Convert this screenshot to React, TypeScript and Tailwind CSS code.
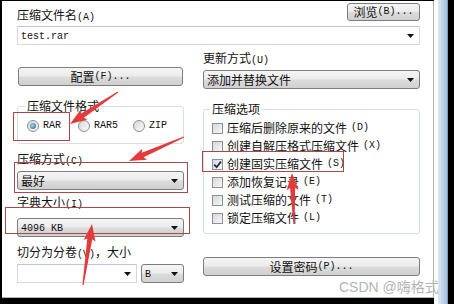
import React from "react";

// ascii runs get a half-width mono face, like SimSun's latin glyphs
function Txt({ s }: { s: string }) {
  const parts = s.split(/([\x20-\x7e]+)/);
  return (
    <>
      {parts.map((p, i) =>
        /[\x20-\x7e]/.test(p) ? (
          <span key={i} className="font-['Liberation_Mono',monospace] text-[10px]">
            {p}
          </span>
        ) : (
          <React.Fragment key={i}>{p}</React.Fragment>
        )
      )}
    </>
  );
}

function Caret() {
  return (
    <svg width="7" height="4" viewBox="0 0 7 4" className="shrink-0">
      <path d="M0 0H7L3.5 4Z" fill="#111" />
    </svg>
  );
}

const face =
  "bg-[linear-gradient(#f5f5f5,#ececec_48%,#dcdcdc_52%,#d0d0d0)] border border-[#7d7d7d] rounded-[3px]";

function Button({ label, className = "" }: { label: string; className?: string }) {
  return (
    <div className={`flex items-center justify-center ${face} ${className}`}>
      <Txt s={label} />
    </div>
  );
}

function Select({ value, className = "" }: { value: string; className?: string }) {
  return (
    <div className={`flex items-center justify-between pl-[3px] pr-[5px] ${face} ${className}`}>
      <span>
        <Txt s={value} />
      </span>
      <Caret />
    </div>
  );
}

function ComboEdit({ value, className = "" }: { value: string; className?: string }) {
  return (
    <div
      className={`flex items-center justify-between border border-[#d6dadf] border-t-[#c2c6cc] bg-white pl-[3px] pr-[5px] ${className}`}
    >
      <span>
        <Txt s={value} />
      </span>
      <Caret />
    </div>
  );
}

function Radio({ label, checked = false, className = "" }: { label: string; checked?: boolean; className?: string }) {
  return (
    <div className={`flex items-center gap-[4px] ${className}`}>
      <span className="flex h-[12px] w-[12px] items-center justify-center rounded-full border border-[#8e8f8f] bg-[linear-gradient(135deg,#d8d8d8,#fbfbfb)]">
        {checked && (
          <span className="h-[6px] w-[6px] rounded-full bg-[radial-gradient(circle_at_40%_40%,#a8daf4,#1d4f7e)]" />
        )}
      </span>
      <Txt s={label} />
    </div>
  );
}

function Check({ label, checked = false }: { label: string; checked?: boolean }) {
  return (
    <div className="flex h-[18px] items-center gap-[4px]">
      <span className="flex h-[11px] w-[11px] items-center justify-center border border-[#8e8f8f] bg-[linear-gradient(135deg,#d4d7dc,#f8f8f8)]">
        {checked && (
          <svg width="9" height="9" viewBox="0 0 9 9">
            <path d="M1.2 4.6L3.6 7.2L8 1.6" fill="none" stroke="#1c2f5c" strokeWidth="1.8" />
          </svg>
        )}
      </span>
      <Txt s={label} />
    </div>
  );
}

function arrow(x1: number, y1: number, x2: number, y2: number, headW = 12, headL = 15) {
  const len = Math.hypot(x2 - x1, y2 - y1);
  const ux = (x2 - x1) / len;
  const uy = (y2 - y1) / len;
  const nx = -uy;
  const ny = ux;
  const bx = x2 - ux * headL;
  const by = y2 - uy * headL;
  const pts = [
    [x1 + nx * 0.6, y1 + ny * 0.6],
    [bx + nx * 2.5, by + ny * 2.5],
    [bx + nx * headW / 2 - ux * 2, by + ny * headW / 2 - uy * 2],
    [x2, y2],
    [bx - nx * headW / 2 - ux * 2, by - ny * headW / 2 - uy * 2],
    [bx - nx * 2.5, by - ny * 2.5],
    [x1 - nx * 0.6, y1 - ny * 0.6],
  ];
  return pts.map((p) => p.map((v) => v.toFixed(1)).join(",")).join(" ");
}

export default function App() {
  return (
    <div className="relative flex h-[304px] w-[454px] overflow-hidden bg-black font-['Noto_Sans_CJK_SC',sans-serif] text-[12px] leading-[14px] text-[#111]">
      <div className="mb-[6px] ml-[2px] mt-[1px] flex w-[432px] flex-col border-b border-r border-[#b4b4b4] bg-white pl-[15px] pr-[13px]">
        <div className="flex h-[24px] items-start justify-between">
          <span className="pt-[7px]">
            <Txt s="压缩文件名(A)" />
          </span>
          <Button className="mt-[2px] h-[18px] w-[73px]" label="浏览(B)..." />
        </div>
        <ComboEdit className="mt-[1px] h-[19px] w-full" value="test.rar" />

        <div className="flex gap-[19px]">
          {/* left column */}
          <div className="flex w-[167px] flex-col">
            <Button className="ml-[1px] mt-[22px] h-[19px] w-[165px]" label="配置(F)..." />
            <fieldset className="mt-[13px] rounded-[3px] border border-[#d5dfe5] pb-[11px] pl-[9px]">
              <legend className="-ml-[2px] px-[2px]">
                <Txt s="压缩文件格式" />
              </legend>
              <div className="mt-[7px] flex h-[12px] items-center">
                <Radio className="w-[51px]" label="RAR" checked />
                <Radio className="w-[55px]" label="RAR5" />
                <Radio label="ZIP" />
              </div>
            </fieldset>
            <span className="mt-[8px]">
              <Txt s="压缩方式(C)" />
            </span>
            <Select className="mt-[2px] h-[19px]" value="最好" />
            <span className="mt-[5px]">
              <Txt s="字典大小(I)" />
            </span>
            <Select className="mt-[6px] h-[19px]" value="4096 KB" />
            <span className="mt-[8px]">
              <Txt s="切分为分卷(V)，大小" />
            </span>
            <div className="mt-[2px] flex gap-[4px]">
              <ComboEdit className="h-[19px] w-[120px]" value="" />
              <Select className="h-[19px] flex-1" value="B" />
            </div>
          </div>

          {/* right column */}
          <div className="flex w-[217px] flex-col">
            <span className="mt-[6px]">
              <Txt s="更新方式(U)" />
            </span>
            <Select className="mt-[2px] h-[19px]" value="添加并替换文件" />
            <fieldset className="mt-[13px] rounded-[3px] border border-[#d5dfe5] pb-[6px] pl-[8px]">
              <legend className="-ml-[2px] px-[2px]">
                <Txt s="压缩选项" />
              </legend>
              <div className="mt-[3px] flex flex-col">
                <Check label="压缩后删除原来的文件(D)" />
                <Check label="创建自解压格式压缩文件(X)" />
                <Check label="创建固实压缩文件(S)" checked />
                <Check label="添加恢复记录(E)" />
                <Check label="测试压缩的文件(T)" />
                <Check label="锁定压缩文件(L)" />
              </div>
            </fieldset>
            <Button className="mt-[23px] h-[19px]" label="设置密码(P)..." />
          </div>
        </div>
      </div>
      <div className="w-[4px] bg-white" />
      <div className="w-[10px] border-r border-[#7f9cb8] bg-gradient-to-r from-[#dbe8f4] to-[#a3c1dd]" />

      {/* annotations */}
      <div className="pointer-events-none absolute left-[13px] top-[112px] h-[29px] w-[57px] border border-[#a84848]" />
      <div className="pointer-events-none absolute left-[14px] top-[162px] h-[31px] w-[174px] border border-[#a84848]" />
      <div className="pointer-events-none absolute left-[5px] top-[207px] h-[27px] w-[185px] border border-[#a84848]" />
      <div className="pointer-events-none absolute left-[202px] top-[151px] h-[21px] w-[142px] border border-[#a84848]" />
      <svg className="pointer-events-none absolute left-0 top-0" width="454" height="304">
        <polygon points={arrow(118, 92, 70, 124)} fill="#e33a3c" />
        <polygon points={arrow(184, 137, 129, 161)} fill="#e33a3c" />
        <polygon points={arrow(294, 224, 292, 173)} fill="#e33a3c" />
        <polygon points={arrow(83, 285, 92, 224)} fill="#e33a3c" />
      </svg>
      <span className="absolute left-[339px] top-[278px] font-['Liberation_Sans','Noto_Sans_CJK_SC',sans-serif] text-[14px] leading-[18px] text-[#b4b4b4]">
        CSDN @嗨格式
      </span>
    </div>
  );
}
